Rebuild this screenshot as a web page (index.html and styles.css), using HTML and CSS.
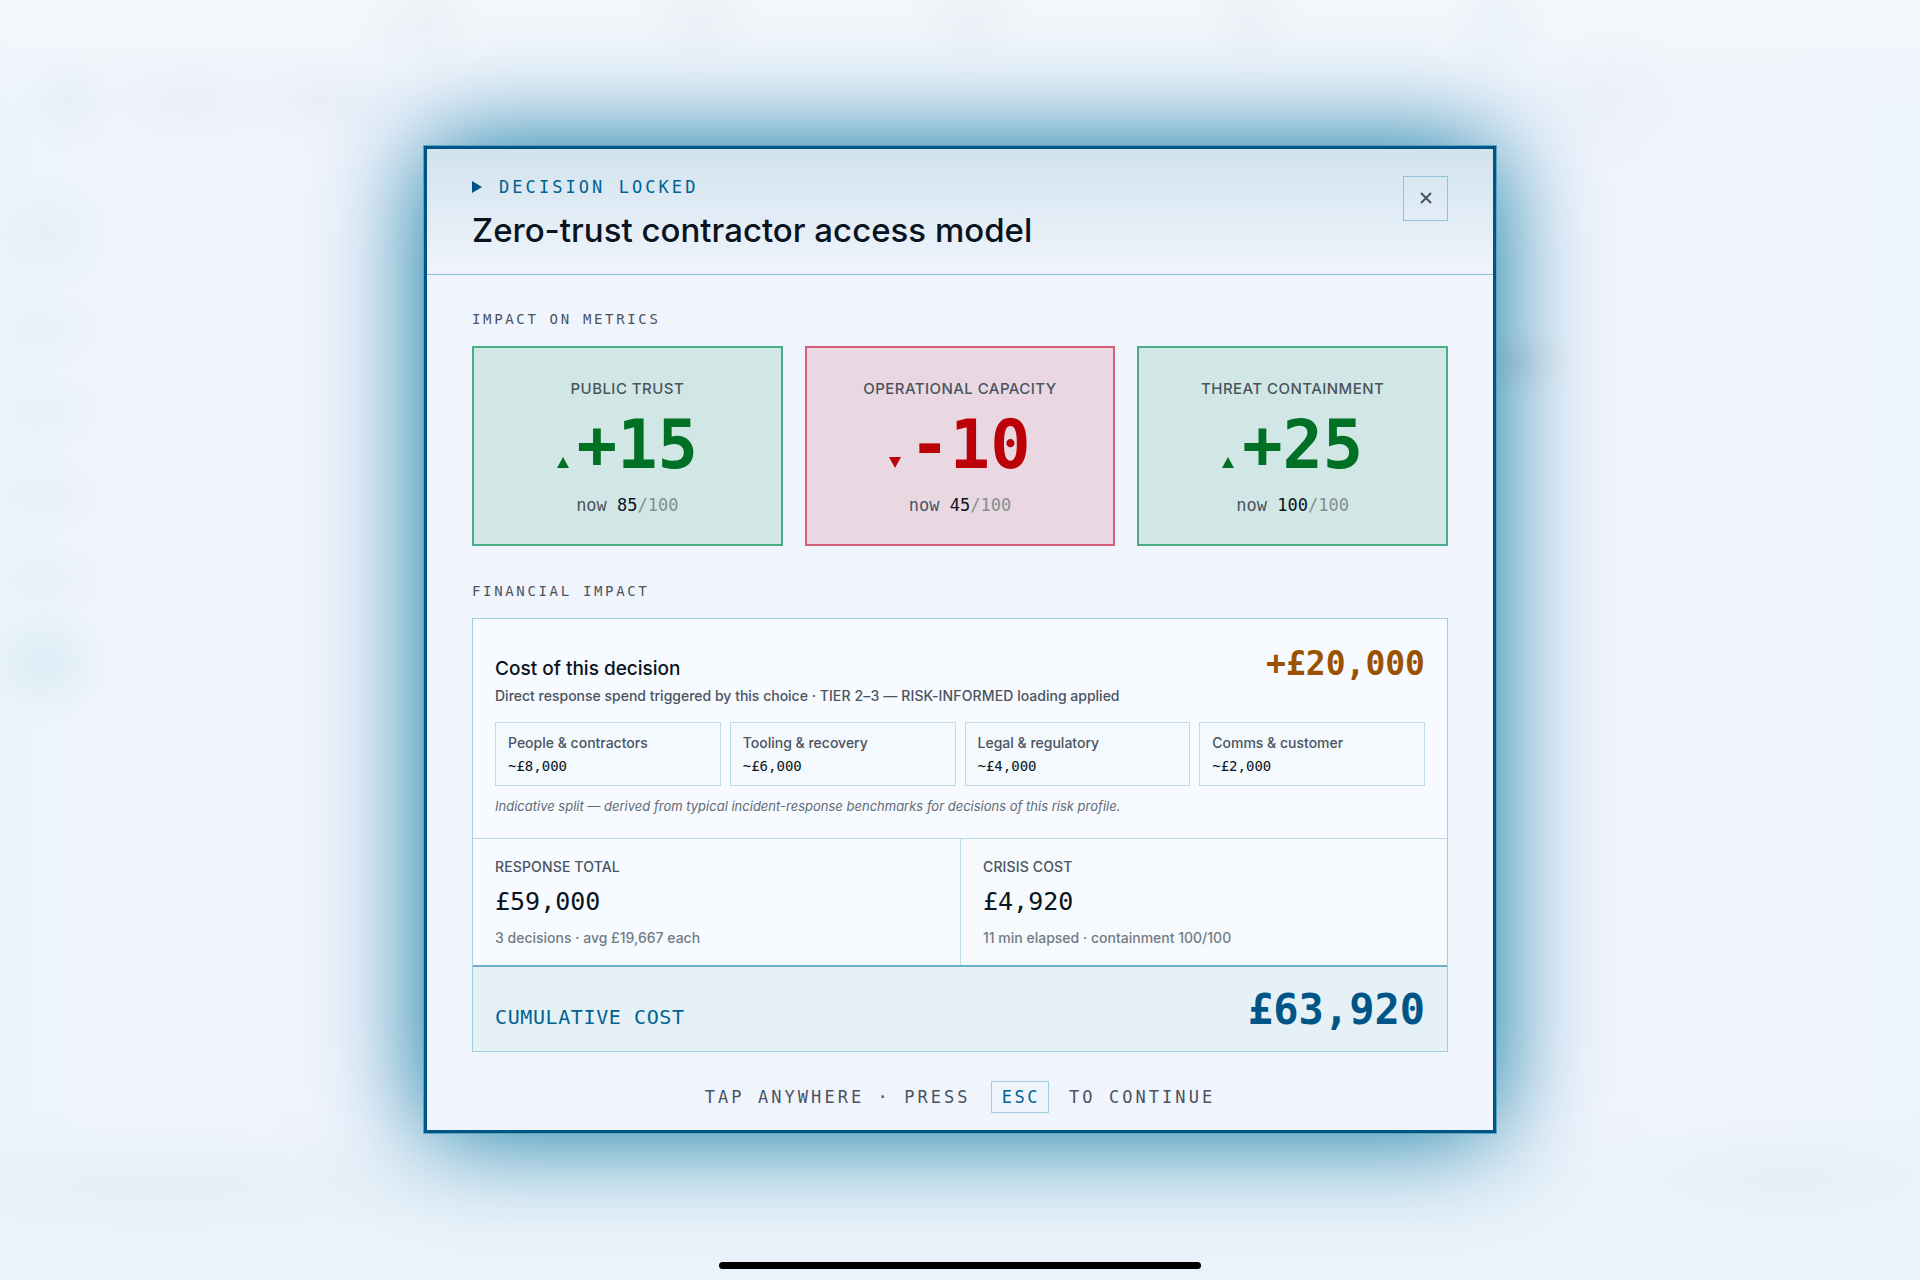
FILE: index.html
```html
<!DOCTYPE html>
<html lang="en">
<head>
  <meta charset="utf-8">
  <meta name="viewport" content="width=device-width, initial-scale=1">
  <title>Decision locked</title>
  <link rel="stylesheet" href="styles.css">
</head>
<body>
  <div class="overlay">
    <div class="dialog" role="dialog" aria-modal="true" aria-labelledby="decisionTitle">
      <header class="dialog-header">
        <div>
          <p class="eyebrow">
            <svg class="play" viewBox="0 0 10 12" aria-hidden="true"><path d="M0 0L10 6L0 12Z"/></svg>
            DECISION LOCKED
          </p>
          <h1 id="decisionTitle">Zero-trust contractor access model</h1>
        </div>
        <button type="button" class="close" id="closeButton" aria-label="Close">
          <svg viewBox="0 0 12 12" aria-hidden="true"><path d="M1 1L11 11M11 1L1 11"/></svg>
        </button>
      </header>

      <div class="dialog-body">
        <h2>IMPACT ON METRICS</h2>
        <div class="metrics">
          <div class="metric up">
            <p class="metric-name">PUBLIC TRUST</p>
            <p class="metric-change"><svg viewBox="0 0 12 11" aria-hidden="true"><path d="M6 0L12 11H0Z"/></svg>+15</p>
            <p class="metric-now">now <strong>85</strong><span>/100</span></p>
          </div>
          <div class="metric down">
            <p class="metric-name">OPERATIONAL CAPACITY</p>
            <p class="metric-change"><svg viewBox="0 0 12 11" aria-hidden="true"><path d="M0 0H12L6 11Z"/></svg>-10</p>
            <p class="metric-now">now <strong>45</strong><span>/100</span></p>
          </div>
          <div class="metric up">
            <p class="metric-name">THREAT CONTAINMENT</p>
            <p class="metric-change"><svg viewBox="0 0 12 11" aria-hidden="true"><path d="M6 0L12 11H0Z"/></svg>+25</p>
            <p class="metric-now">now <strong>100</strong><span>/100</span></p>
          </div>
        </div>

        <h2>FINANCIAL IMPACT</h2>
        <div class="finance">
          <section class="cost">
            <div class="cost-head">
              <h3>Cost of this decision</h3>
              <span class="cost-amount">+£20,000</span>
            </div>
            <p class="cost-text">Direct response spend triggered by this choice · <span class="tier">TIER 2–3 — RISK-INFORMED</span> loading applied</p>
            <dl class="split">
              <div class="split-item">
                <dt>People &amp; contractors</dt>
                <dd>~£8,000</dd>
              </div>
              <div class="split-item">
                <dt>Tooling &amp; recovery</dt>
                <dd>~£6,000</dd>
              </div>
              <div class="split-item">
                <dt>Legal &amp; regulatory</dt>
                <dd>~£4,000</dd>
              </div>
              <div class="split-item">
                <dt>Comms &amp; customer</dt>
                <dd>~£2,000</dd>
              </div>
            </dl>
            <p class="note">Indicative split — derived from typical incident-response benchmarks for decisions of this risk profile.</p>
          </section>

          <div class="totals">
            <div class="total">
              <p class="total-name">RESPONSE TOTAL</p>
              <p class="total-value">£59,000</p>
              <p class="total-text">3 decisions · avg £19,667 each</p>
            </div>
            <div class="total crisis">
              <p class="total-name">CRISIS COST</p>
              <p class="total-value">£4,920</p>
              <p class="total-text">11 min elapsed · containment 100/100</p>
            </div>
          </div>

          <div class="cumulative">
            <span class="cumulative-name">CUMULATIVE COST</span>
            <span class="cumulative-value">£63,920</span>
          </div>
        </div>

        <p class="hint">TAP ANYWHERE · PRESS <kbd>ESC</kbd> TO CONTINUE</p>
      </div>
    </div>
  </div>
  <div class="home-bar"></div>

  <script>
    const overlay = document.querySelector('.overlay');

    function closeOverlay() {
      overlay.hidden = true;
    }

    overlay.addEventListener('click', closeOverlay);
    document.addEventListener('keydown', function(event) {
      if (event.key === 'Escape') {
        closeOverlay();
      }
    });
  </script>
</body>
</html>
```
FILE: styles.css
```css
:root {
    --sans: Inter, "Liberation Sans", sans-serif;
    --mono: "DejaVu Sans Mono", "Liberation Mono", monospace;
    --ink: #0a1420;
    --muted: #4a535f;
    --faint: #727a84;
    --blue: #005587;
    --line: #9fcfe0;
}
* {
    box-sizing: border-box;
}
body, h1, h2, h3, p, dl, dd {
    margin: 0;
}
body {
    font-family: var(--sans);
    color: var(--ink);
    background-color: #eef4fc;
}
.overlay {
    min-height: 100vh;
    display: flex;
    align-items: center;
    justify-content: center;
    padding: 24px 24px 26px;
    /* faint traces of the page behind */
    background-image:
        radial-gradient(ellipse 70px 60px at 45px 235px, rgba(215, 236, 238, 0.4), transparent),
        radial-gradient(ellipse 60px 40px at 45px 330px, rgba(220, 232, 240, 0.3), transparent),
        radial-gradient(ellipse 60px 40px at 45px 412px, rgba(220, 232, 240, 0.3), transparent),
        radial-gradient(ellipse 60px 40px at 45px 495px, rgba(220, 230, 238, 0.3), transparent),
        radial-gradient(ellipse 60px 40px at 45px 580px, rgba(220, 230, 238, 0.3), transparent),
        radial-gradient(ellipse 65px 60px at 45px 662px, rgba(200, 228, 238, 0.45), transparent),
        radial-gradient(ellipse 50px 50px at 70px 100px, rgba(218, 228, 238, 0.35), transparent),
        radial-gradient(ellipse 90px 50px at 190px 100px, rgba(218, 228, 238, 0.3), transparent),
        radial-gradient(ellipse 90px 50px at 320px 98px, rgba(218, 228, 238, 0.3), transparent),
        radial-gradient(ellipse 65px 55px at 420px 20px, rgba(224, 231, 238, 0.35), transparent),
        radial-gradient(ellipse 65px 55px at 700px 20px, rgba(224, 231, 238, 0.35), transparent),
        radial-gradient(ellipse 65px 55px at 970px 20px, rgba(224, 231, 238, 0.35), transparent),
        radial-gradient(ellipse 55px 55px at 1250px 20px, rgba(224, 231, 238, 0.35), transparent),
        radial-gradient(ellipse 55px 55px at 1500px 20px, rgba(220, 232, 242, 0.35), transparent),
        radial-gradient(ellipse 80px 70px at 1610px 95px, rgba(222, 232, 240, 0.3), transparent),
        radial-gradient(ellipse 60px 36px at 1515px 362px, rgba(170, 160, 170, 0.18), transparent),
        radial-gradient(ellipse 320px 60px at 160px 1185px, rgba(220, 230, 238, 0.35), transparent),
        radial-gradient(ellipse 170px 55px at 1790px 1175px, rgba(220, 230, 238, 0.35), transparent),
        linear-gradient(#f3f8fb, #f3f8fb00 110px),
        linear-gradient(#ebf3fb00 1110px, #ebf3fb 1180px),
        linear-gradient(90deg, #ecf4fb, #f0f4fd 120px, #f0f4fd calc(100% - 320px), #eef4fc);
}
.overlay[hidden] {
    display: none;
}
.dialog {
    width: 100%;
    max-width: 1072px;
    background-color: #f0f4fd;
    border: 3px solid var(--blue);
    box-shadow: 0 0 0 1px #5ba2bf, 0 0 100px #00739d;
}
.dialog-header {
    display: flex;
    justify-content: space-between;
    align-items: flex-start;
    padding: 27px 45px 24px;
    background-image: linear-gradient(#d1e3ed, #f0f4fd);
    border-bottom: 1px solid #86c0d6;
}
.eyebrow {
    display: flex;
    align-items: center;
    gap: 17px;
    margin-bottom: 12px;
    font: 17px/22px var(--mono);
    letter-spacing: 0.18em;
    color: #006293;
}
.play {
    width: 10px;
    height: 12px;
    fill: var(--blue);
}
h1 {
    font-size: 33px;
    line-height: 40px;
    font-weight: 500;
}
.close {
    width: 45px;
    height: 45px;
    display: grid;
    place-items: center;
    padding: 0;
    background: none;
    border: 1px solid #8cc4da;
    cursor: pointer;
}
.close svg {
    width: 12px;
    height: 12px;
    fill: none;
    stroke: var(--muted);
    stroke-width: 2;
}
.dialog-body {
    padding: 35px 45px 17px;
}
h2 {
    margin-bottom: 18px;
    font: 14px/18px var(--mono);
    letter-spacing: 0.19em;
    color: var(--muted);
}
.metrics {
    display: grid;
    grid-template-columns: repeat(3, 1fr);
    gap: 22px;
    margin-bottom: 36px;
}
.metric {
    padding: 31px 16px 28px;
    border: 2px solid;
    text-align: center;
}
.up {
    background-color: #d1e7e5;
    border-color: #4bad86;
}
.down {
    background-color: #e9d8e2;
    border-color: #d35f78;
}
.metric-name {
    font-size: 15px;
    line-height: 20px;
    letter-spacing: 0.03em;
    font-weight: 500;
    color: var(--muted);
}
.metric-change {
    display: flex;
    justify-content: center;
    align-items: baseline;
    gap: 8px;
    margin: 12px 0 15px;
    font: bold 67px/68px var(--mono);
}
.metric-change svg {
    width: 12px;
    height: 11px;
    fill: currentColor;
}
.up .metric-change {
    color: #007025;
}
.down .metric-change {
    color: #bc0008;
}
.metric-now {
    font: 17px/22px var(--mono);
    color: var(--muted);
}
.metric-now strong {
    font-weight: normal;
    color: var(--ink);
}
.metric-now span {
    color: #84908f;
}
.finance {
    border: 1px solid var(--line);
    background-color: #f7faff;
}
.cost {
    padding: 25px 22px 23px;
    border-bottom: 1px solid #bcdce8;
}
.cost-head {
    display: flex;
    justify-content: space-between;
    align-items: baseline;
    margin-bottom: 2px;
}
h3 {
    font-size: 19px;
    line-height: 28px;
    font-weight: 500;
}
.cost-amount {
    font: bold 33px/40px var(--mono);
    color: #9a5200;
}
.cost-text {
    margin-bottom: 16px;
    font-size: 14px;
    line-height: 20px;
    font-weight: 500;
    color: var(--muted);
}
.tier {
    letter-spacing: 0.01em;
}
.split {
    display: grid;
    grid-template-columns: repeat(4, 1fr);
    gap: 9px;
}
.split-item {
    padding: 11px 12px 10px;
    background-color: #f4f9fd;
    border: 1px solid #c0dbe9;
}
.split-item dt {
    margin-bottom: 5px;
    font-size: 14px;
    line-height: 18px;
    font-weight: 500;
    color: var(--muted);
}
.split-item dd {
    font: 14px/18px var(--mono);
}
.note {
    margin-top: 11px;
    font-size: 13px;
    line-height: 18px;
    font-style: italic;
    color: #626b76;
}
.totals {
    display: grid;
    grid-template-columns: repeat(2, 1fr);
}
.total {
    padding: 19px 22px 18px;
}
.crisis {
    background-color: #f6fafd;
    border-left: 1px solid #bcdce8;
}
.total-name {
    font-size: 14px;
    line-height: 18px;
    letter-spacing: 0.01em;
    font-weight: 500;
    color: var(--muted);
}
.total-value {
    margin: 10px 0 11px;
    font: 25px/32px var(--mono);
}
.total-text {
    font-size: 14px;
    line-height: 18px;
    font-weight: 500;
    color: var(--faint);
}
.cumulative {
    display: flex;
    justify-content: space-between;
    align-items: baseline;
    padding: 18px 22px 16px;
    background-color: #e5f1f6;
    border-top: 2px solid #6cb0c8;
    color: var(--blue);
}
.cumulative-name {
    font: 20px/26px var(--mono);
    letter-spacing: 0.03em;
    color: #006293;
}
.cumulative-value {
    font: bold 42px/50px var(--mono);
}
.hint {
    display: flex;
    flex-wrap: wrap;
    justify-content: center;
    align-items: center;
    gap: 20px;
    margin-top: 29px;
    font: 17px/22px var(--mono);
    letter-spacing: 0.18em;
    color: var(--muted);
}
.hint kbd {
    padding: 4px 8px 4px 10px;
    border: 1px solid var(--line);
    font: 17px/22px var(--mono);
    letter-spacing: 0.15em;
    color: #006293;
}
/* device home indicator */
.home-bar {
    position: fixed;
    left: 50%;
    bottom: 11px;
    width: 482px;
    height: 7px;
    margin-left: -241px;
    border-radius: 4px;
    background-color: #000;
}
```
